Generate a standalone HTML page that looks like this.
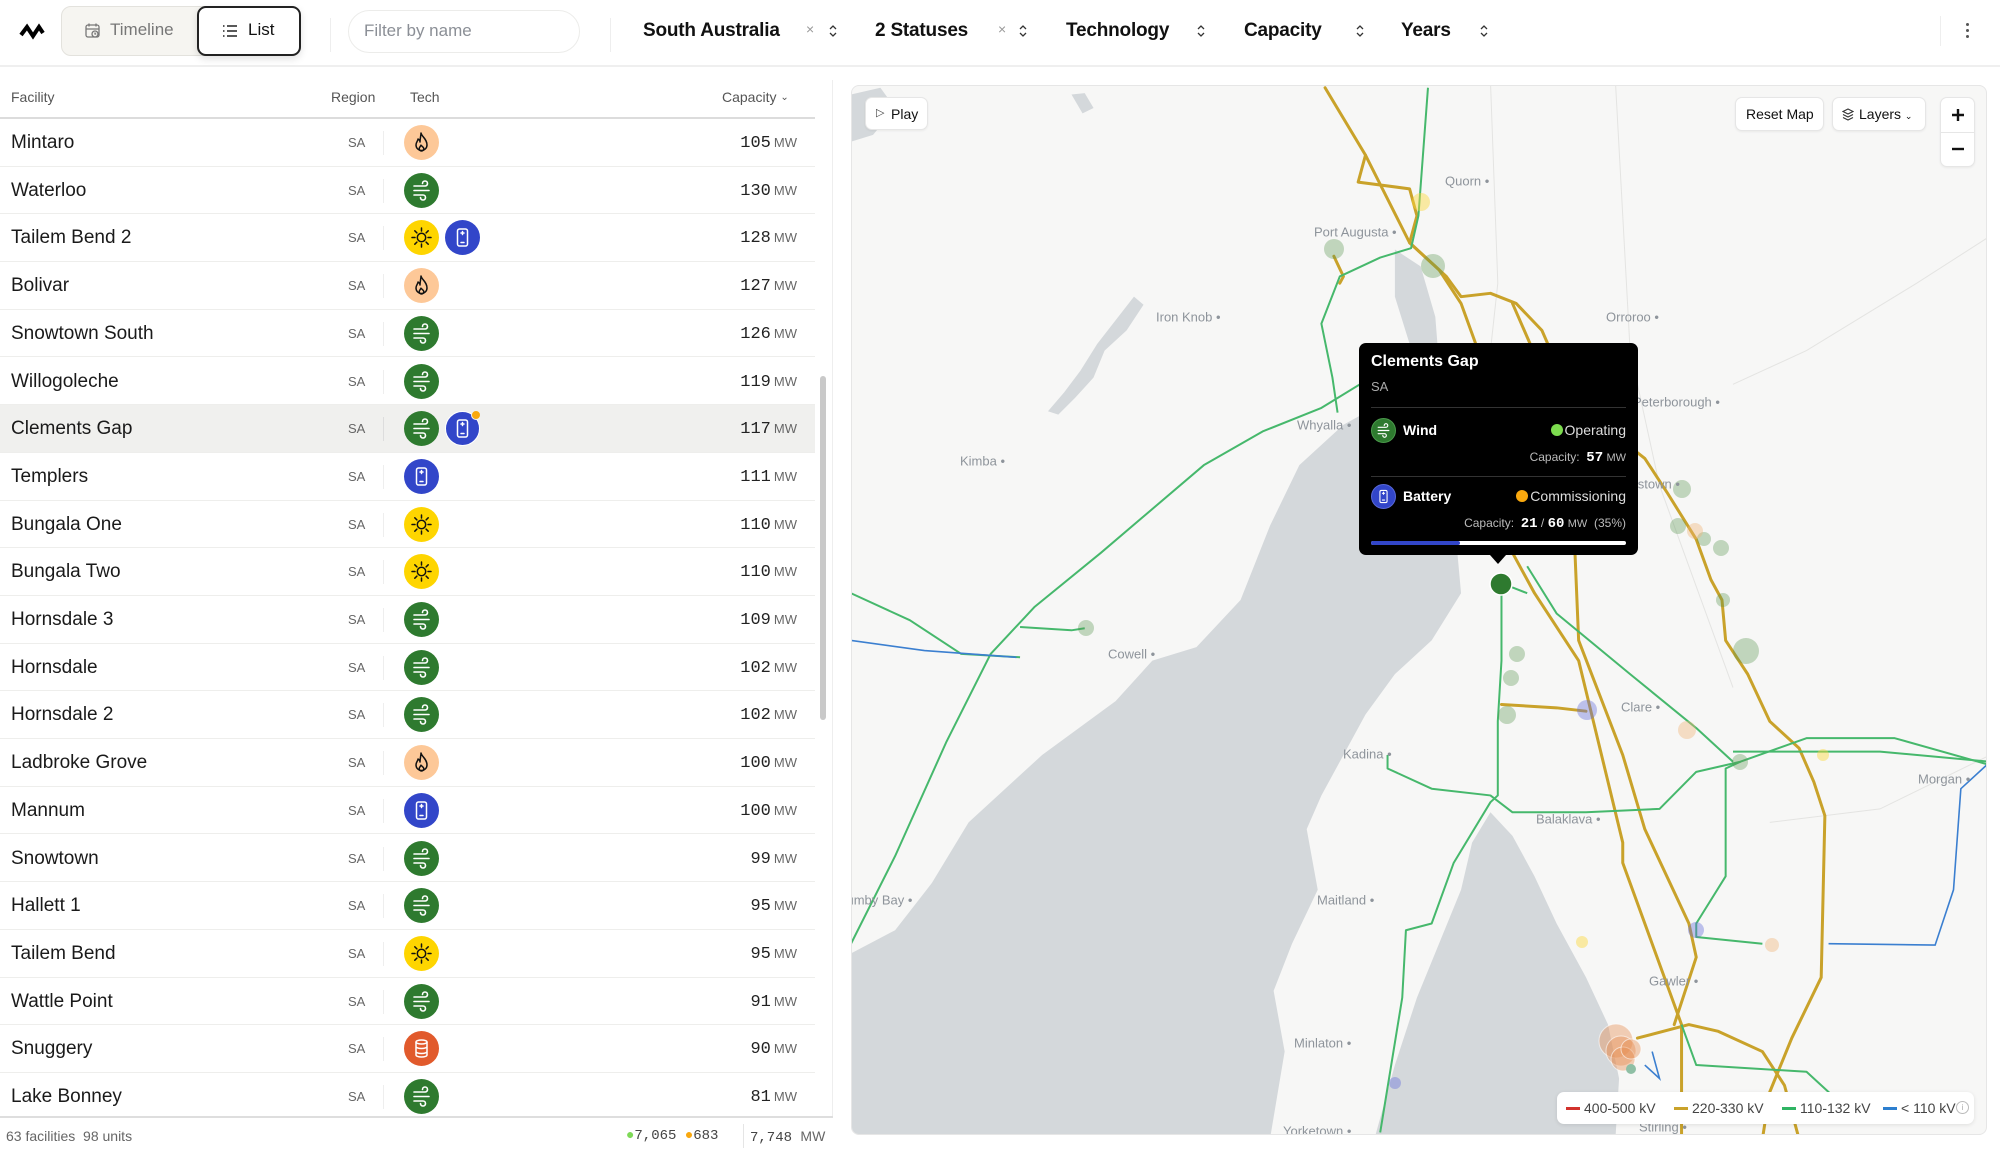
<!DOCTYPE html>
<html><head><meta charset="utf-8">
<style>
*{box-sizing:border-box;margin:0;padding:0}
body{width:2000px;height:1153px;overflow:hidden;background:#fff;font-family:"Liberation Sans",sans-serif;color:#111;position:relative}
.abs{position:absolute}
.hdr{position:absolute;left:0;top:0;width:2000px;height:67px;border-bottom:2px solid #efefef;background:#fff}
.flt{position:absolute;top:20px;font-size:19px;font-weight:bold;letter-spacing:-0.2px}
.chev{position:absolute;top:23px}
.x{position:absolute;top:21px;color:#999;font-size:14px}
.th{position:absolute;top:89px;font-size:14px;color:#555}
.row{position:absolute;left:0;width:815px;height:47.7px;border-bottom:1px solid #eeeeec}
.row .n{position:absolute;left:11px;top:13px;font-size:19px;color:#1a1a1a}
.row .r{position:absolute;left:348px;top:16px;font-size:13px;color:#666}
.row .sep{position:absolute;left:383px;top:12px;width:1px;height:24px;background:#eee}
.row .c{position:absolute;right:18px;top:13px;font-size:17px;font-family:"Liberation Mono",monospace;color:#222;line-height:22px}
.row .c small{font-family:"Liberation Sans",sans-serif;font-size:13px;color:#666;margin-left:3px;vertical-align:baseline}
.ic{position:absolute;top:6px;width:35px;height:35px;border-radius:50%}
.ic svg{position:absolute;left:0;top:0}
.mbtn{position:absolute;background:#fff;border:1px solid #e6e6e6;border-radius:7px;font-size:14px;color:#111;box-shadow:0 1px 2px rgba(0,0,0,.06)}
.lbl{font-size:13px;fill:#8e949b;font-family:"Liberation Sans",sans-serif}
</style></head><body>
<svg width="0" height="0" style="position:absolute">
<defs>
<symbol id="wind" viewBox="0 0 35 35"><g fill="none" stroke="#fff" stroke-width="1.6" stroke-linecap="round"><path d="M10 13h11a2.5 2.5 0 1 0-2.5-2.5"/><path d="M10 17.5h15"/><path d="M10 22h9a2.5 2.5 0 1 1-2.5 2.5"/></g></symbol>
<symbol id="gas" viewBox="0 0 35 35"><g fill="none" stroke="#111" stroke-width="1.5" stroke-linejoin="round"><path d="M17 8c1 4 6 6 6 12a5.5 5.5 0 0 1-11 0c0-3 2-4 2-6 1.5 1 2 2 2 3 0-4 1-6 1-9z"/><path d="M17.5 26a2.3 2.3 0 0 1-2.3-2.3c0-1.5 1.3-2.2 1.8-3.5.8 1 2.8 2 2.8 3.5a2.3 2.3 0 0 1-2.3 2.3z"/></g></symbol>
<symbol id="sun" viewBox="0 0 35 35"><g fill="none" stroke="#111" stroke-width="1.5" stroke-linecap="round"><circle cx="17.5" cy="17.5" r="4.2"/><path d="M17.5 8v3M17.5 24v3M8 17.5h3M24 17.5h3M10.8 10.8l2.1 2.1M22.1 22.1l2.1 2.1M10.8 24.2l2.1-2.1M22.1 12.9l2.1-2.1"/></g></symbol>
<symbol id="bat" viewBox="0 0 35 35"><g fill="none" stroke="#fff" stroke-width="1.5"><rect x="12.5" y="9" width="10" height="17" rx="2"/><path d="M17.5 11.5v3M16 13h3M16 22.5h3" stroke-linecap="round"/></g></symbol>
<symbol id="oil" viewBox="0 0 35 35"><g fill="none" stroke="#fff" stroke-width="1.5"><ellipse cx="17.5" cy="11" rx="5.5" ry="2"/><path d="M12 11v13c0 1.2 2.5 2 5.5 2s5.5-.8 5.5-2V11M12 15.5c0 1.2 2.5 2 5.5 2s5.5-.8 5.5-2M12 20.5c0 1.2 2.5 2 5.5 2s5.5-.8 5.5-2"/></g></symbol>
<symbol id="ud" viewBox="0 0 10 16"><path d="M2 6l3-3 3 3M2 10l3 3 3-3" fill="none" stroke="#333" stroke-width="1.3"/></symbol>
</defs></svg>

<div class="hdr">
 <svg class="abs" style="left:19px;top:21px" width="26" height="20" viewBox="0 0 26 20"><path d="M2 14L8 6l6 9 6-9 4 6" fill="none" stroke="#000" stroke-width="4" stroke-linejoin="miter"/></svg>
 <div class="abs" style="left:61px;top:6px;width:240px;height:50px;background:#f6f5f1;border:1px solid #e3e2dd;border-radius:10px"></div>
 <svg class="abs" style="left:84px;top:22px" width="18" height="18" viewBox="0 0 18 18"><g fill="none" stroke="#777" stroke-width="1.3"><rect x="2" y="3" width="13" height="12" rx="2"/><path d="M5 1.5v3M12 1.5v3M2 7h13"/><circle cx="11" cy="12" r="3" fill="#f6f5f1"/><path d="M11 10.5v1.5h1.2"/></g></svg>
 <div class="abs" style="left:110px;top:20px;font-size:17px;color:#777">Timeline</div>
 <div class="abs" style="left:197px;top:6px;width:104px;height:50px;background:#fff;border:2px solid #222;border-radius:9px;box-shadow:0 3px 8px rgba(0,0,0,.12)"></div>
 <svg class="abs" style="left:222px;top:23px" width="16" height="16" viewBox="0 0 16 16"><g stroke="#222" stroke-width="1.4"><path d="M5 3h10M5 8h10M5 13h10M1 3h1.5M1 8h1.5M1 13h1.5"/></g></svg>
 <div class="abs" style="left:248px;top:20px;font-size:17px;color:#111">List</div>
 <div class="abs" style="left:330px;top:18px;width:1px;height:34px;background:#eee"></div>
 <div class="abs" style="left:348px;top:10px;width:232px;height:43px;border:1px solid #ececea;border-radius:22px"></div>
 <div class="abs" style="left:364px;top:21px;font-size:17px;color:#8b8f96">Filter by name</div>
 <div class="abs" style="left:610px;top:18px;width:1px;height:34px;background:#eee"></div>
 <div class="flt" style="left:643px">South Australia</div><div class="x" style="left:806px">×</div><svg class="chev" style="left:828px" width="10" height="16"><use href="#ud"/></svg>
 <div class="flt" style="left:875px">2 Statuses</div><div class="x" style="left:998px">×</div><svg class="chev" style="left:1018px" width="10" height="16"><use href="#ud"/></svg>
 <div class="flt" style="left:1066px">Technology</div><svg class="chev" style="left:1196px" width="10" height="16"><use href="#ud"/></svg>
 <div class="flt" style="left:1244px">Capacity</div><svg class="chev" style="left:1355px" width="10" height="16"><use href="#ud"/></svg>
 <div class="flt" style="left:1401px">Years</div><svg class="chev" style="left:1479px" width="10" height="16"><use href="#ud"/></svg>
 <div class="abs" style="left:1940px;top:16px;width:1px;height:30px;background:#eee"></div>
 <div class="abs" style="left:1966px;top:23px;width:3px;height:3px;background:#555;border-radius:50%;box-shadow:0 6px 0 #555,0 12px 0 #555"></div>
</div>

<div class="th" style="left:11px">Facility</div>
<div class="th" style="left:331px">Region</div>
<div class="th" style="left:410px">Tech</div>
<div class="th" style="left:722px">Capacity <span style="font-size:10px;position:relative;top:-2px">⌄</span></div>
<div class="abs" style="left:0;top:117px;width:815px;height:2px;background:#dcdcdc"></div>

<div class="row" style="top:119px"><div class="n">Mintaro</div><div class="r">SA</div><div class="sep"></div><div class="ic" style="left:404px;background:#fdc898"><svg width="35" height="35"><use href="#gas"/></svg></div><div class="c">105<small>MW</small></div></div>
<div class="row" style="top:166.7px"><div class="n">Waterloo</div><div class="r">SA</div><div class="sep"></div><div class="ic" style="left:404px;background:#2e7a2f"><svg width="35" height="35"><use href="#wind"/></svg></div><div class="c">130<small>MW</small></div></div>
<div class="row" style="top:214.4px"><div class="n">Tailem Bend 2</div><div class="r">SA</div><div class="sep"></div><div class="ic" style="left:404px;background:#fed500"><svg width="35" height="35"><use href="#sun"/></svg></div><div class="ic" style="left:445px;background:#3246c9"><svg width="35" height="35"><use href="#bat"/></svg></div><div class="c">128<small>MW</small></div></div>
<div class="row" style="top:262.1px"><div class="n">Bolivar</div><div class="r">SA</div><div class="sep"></div><div class="ic" style="left:404px;background:#fdc898"><svg width="35" height="35"><use href="#gas"/></svg></div><div class="c">127<small>MW</small></div></div>
<div class="row" style="top:309.8px"><div class="n">Snowtown South</div><div class="r">SA</div><div class="sep"></div><div class="ic" style="left:404px;background:#2e7a2f"><svg width="35" height="35"><use href="#wind"/></svg></div><div class="c">126<small>MW</small></div></div>
<div class="row" style="top:357.5px"><div class="n">Willogoleche</div><div class="r">SA</div><div class="sep"></div><div class="ic" style="left:404px;background:#2e7a2f"><svg width="35" height="35"><use href="#wind"/></svg></div><div class="c">119<small>MW</small></div></div>
<div class="row" style="top:405.2px;background:#f0f0ee"><div class="n">Clements Gap</div><div class="r">SA</div><div class="sep" style="background:#ddd"></div><div class="ic" style="left:404px;background:#2e7a2f"><svg width="35" height="35"><use href="#wind"/></svg></div><div class="ic" style="left:445px;background:#3246c9;border:1.5px solid #fff"><svg width="35" height="35" style="left:-1.5px;top:-1.5px"><use href="#bat"/></svg></div><div class="abs" style="left:471px;top:5px;width:10px;height:10px;border-radius:50%;background:#f9a80e;border:1.5px solid #f0f0ee"></div><div class="c">117<small>MW</small></div></div>
<div class="row" style="top:452.9px"><div class="n">Templers</div><div class="r">SA</div><div class="sep"></div><div class="ic" style="left:404px;background:#3246c9"><svg width="35" height="35"><use href="#bat"/></svg></div><div class="c">111<small>MW</small></div></div>
<div class="row" style="top:500.6px"><div class="n">Bungala One</div><div class="r">SA</div><div class="sep"></div><div class="ic" style="left:404px;background:#fed500"><svg width="35" height="35"><use href="#sun"/></svg></div><div class="c">110<small>MW</small></div></div>
<div class="row" style="top:548.3px"><div class="n">Bungala Two</div><div class="r">SA</div><div class="sep"></div><div class="ic" style="left:404px;background:#fed500"><svg width="35" height="35"><use href="#sun"/></svg></div><div class="c">110<small>MW</small></div></div>
<div class="row" style="top:596px"><div class="n">Hornsdale 3</div><div class="r">SA</div><div class="sep"></div><div class="ic" style="left:404px;background:#2e7a2f"><svg width="35" height="35"><use href="#wind"/></svg></div><div class="c">109<small>MW</small></div></div>
<div class="row" style="top:643.7px"><div class="n">Hornsdale</div><div class="r">SA</div><div class="sep"></div><div class="ic" style="left:404px;background:#2e7a2f"><svg width="35" height="35"><use href="#wind"/></svg></div><div class="c">102<small>MW</small></div></div>
<div class="row" style="top:691.4px"><div class="n">Hornsdale 2</div><div class="r">SA</div><div class="sep"></div><div class="ic" style="left:404px;background:#2e7a2f"><svg width="35" height="35"><use href="#wind"/></svg></div><div class="c">102<small>MW</small></div></div>
<div class="row" style="top:739.1px"><div class="n">Ladbroke Grove</div><div class="r">SA</div><div class="sep"></div><div class="ic" style="left:404px;background:#fdc898"><svg width="35" height="35"><use href="#gas"/></svg></div><div class="c">100<small>MW</small></div></div>
<div class="row" style="top:786.8px"><div class="n">Mannum</div><div class="r">SA</div><div class="sep"></div><div class="ic" style="left:404px;background:#3246c9"><svg width="35" height="35"><use href="#bat"/></svg></div><div class="c">100<small>MW</small></div></div>
<div class="row" style="top:834.5px"><div class="n">Snowtown</div><div class="r">SA</div><div class="sep"></div><div class="ic" style="left:404px;background:#2e7a2f"><svg width="35" height="35"><use href="#wind"/></svg></div><div class="c">99<small>MW</small></div></div>
<div class="row" style="top:882.2px"><div class="n">Hallett 1</div><div class="r">SA</div><div class="sep"></div><div class="ic" style="left:404px;background:#2e7a2f"><svg width="35" height="35"><use href="#wind"/></svg></div><div class="c">95<small>MW</small></div></div>
<div class="row" style="top:929.9px"><div class="n">Tailem Bend</div><div class="r">SA</div><div class="sep"></div><div class="ic" style="left:404px;background:#fed500"><svg width="35" height="35"><use href="#sun"/></svg></div><div class="c">95<small>MW</small></div></div>
<div class="row" style="top:977.6px"><div class="n">Wattle Point</div><div class="r">SA</div><div class="sep"></div><div class="ic" style="left:404px;background:#2e7a2f"><svg width="35" height="35"><use href="#wind"/></svg></div><div class="c">91<small>MW</small></div></div>
<div class="row" style="top:1025.3px"><div class="n">Snuggery</div><div class="r">SA</div><div class="sep"></div><div class="ic" style="left:404px;background:#e15a2c"><svg width="35" height="35"><use href="#oil"/></svg></div><div class="c">90<small>MW</small></div></div>
<div class="row" style="top:1073px;border-bottom:none"><div class="n">Lake Bonney</div><div class="r">SA</div><div class="sep"></div><div class="ic" style="left:404px;background:#2e7a2f"><svg width="35" height="35"><use href="#wind"/></svg></div><div class="c">81<small>MW</small></div></div>

<div class="abs" style="left:820px;top:376px;width:6px;height:344px;border-radius:3px;background:#c9c9c9"></div>
<div class="abs" style="left:832px;top:80px;width:1px;height:1037px;background:#eee"></div>
<div class="abs" style="left:0;top:1116px;width:833px;height:2px;background:#dedede"></div>
<div class="abs" style="left:6px;top:1128px;font-size:14px;color:#666">63 facilities&nbsp;&nbsp;98 units</div>
<div class="abs" style="left:626px;top:1128px;font-size:14px;color:#444;font-family:'Liberation Mono',monospace"><span style="color:#7ed957">●</span>7,065 <span style="color:#f9a80e">●</span>683</div>
<div class="abs" style="left:743px;top:1124px;width:1px;height:24px;background:#e5e5e5"></div>
<div class="abs" style="left:750px;top:1128px;font-size:14px;color:#444;font-family:'Liberation Mono',monospace">7,748 <span style="font-family:'Liberation Sans',sans-serif;color:#666">MW</span></div>

<div class="abs" style="left:851px;top:85px;width:1136px;height:1050px;border:1px solid #e6e6e6;border-radius:8px;overflow:hidden;background:#f7f7f6">
<svg class="abs" style="left:-851px;top:-85px" width="2000" height="1153">
<g transform="translate(850,80) scale(0.735,0.674)">
 <g fill="#d4d8db">
  <path d="M740 250L775 275L795 350L800 420L815 560L825 700L830 760L790 830L740 880L700 940L670 1000L640 1060L620 1110L635 1200L600 1280L575 1350L590 1440L570 1570L-10 1570L-10 1300L60 1260L110 1190L160 1100L260 1000L360 920L410 860L470 840L530 770L570 660L610 570L670 510L720 480L760 390L740 320Z"/>
  <path d="M870 1085L900 1120L930 1180L960 1250L1000 1330L1030 1400L1045 1480L1040 1570L712 1570L740 1460L770 1360L800 1280L830 1200L845 1130Z"/>
  <path d="M0 20L40 10L60 40L30 80L0 90Z"/>
  <path d="M385 320L398 332L375 370L345 400L330 440L305 470L282 495L268 490L290 462L312 430L335 390L360 355Z"/>
  <path d="M300 20L318 18L330 40L315 48Z"/>
 </g>
 <g fill="none" stroke="#e4e4e2" stroke-width="1">
  <path vector-effect="non-scaling-stroke" d="M870 0L880 300L860 500"/>
  <path vector-effect="non-scaling-stroke" d="M1040 0L1060 400L1100 600L1200 900"/>
  <path vector-effect="non-scaling-stroke" d="M1550 230L1450 300L1300 400L1200 450"/>
  <path vector-effect="non-scaling-stroke" d="M1550 1000L1400 1080L1250 1100"/>
 </g>
 <g fill="none" stroke="#c9a22a" stroke-width="3" stroke-linejoin="round" stroke-linecap="round">
  <path vector-effect="non-scaling-stroke" d="M645 10L700 110L760 240L810 290L830 320L870 315L905 330L940 370L960 420L1010 500L1080 560L1110 610L1150 680L1170 740L1185 770L1190 830L1220 880L1250 950L1290 990L1310 1040L1325 1090L1320 1330L1280 1420L1250 1500L1240 1570"/>
  <path vector-effect="non-scaling-stroke" d="M700 110L690 150L760 160L770 200L760 240L800 280L830 330L860 420L880 560L900 700L930 760L990 860L1010 950L1050 1130L1050 1160L1090 1280L1110 1340L1130 1400L1130 1570"/>
  <path vector-effect="non-scaling-stroke" d="M900 330L920 380L960 480L985 700L990 830L1050 1000L1080 1110L1140 1250L1150 1300L1120 1400"/>
  <path vector-effect="non-scaling-stroke" d="M885 925L960 930L1000 935"/>
  <path vector-effect="non-scaling-stroke" d="M1070 1420L1140 1400L1180 1410L1240 1440L1270 1490L1290 1570"/>
  <path vector-effect="non-scaling-stroke" d="M657 260L670 290L665 300"/>
 </g>
 <g fill="none" stroke="#46b86c" stroke-width="2" stroke-linejoin="round">
  <path vector-effect="non-scaling-stroke" d="M785 10L772 200L762 248L720 262L665 290L640 360L655 440L662 492"/>
  <path vector-effect="non-scaling-stroke" d="M0 1280L60 1150L130 980L190 850L250 780L340 700L480 570L560 520L640 485L700 445L760 420"/>
  <path vector-effect="non-scaling-stroke" d="M0 760L80 800L150 850L230 855"/>
  <path vector-effect="non-scaling-stroke" d="M230 810L300 815L318 812"/>
  <path vector-effect="non-scaling-stroke" d="M885 745L885 860L880 950L880 1060L870 1070L820 1160L790 1250L755 1260L750 1360L720 1560"/>
  <path vector-effect="non-scaling-stroke" d="M730 1000L730 1020L790 1050L870 1060L900 1085L1000 1085L1100 1080L1150 1025L1210 1010L1300 975L1420 975L1550 1015"/>
  <path vector-effect="non-scaling-stroke" d="M1210 1010L1190 1020L1190 1180L1150 1250L1150 1270L1240 1280"/>
  <path vector-effect="non-scaling-stroke" d="M920 720L960 790L1060 880L1150 960L1200 1010"/>
  <path vector-effect="non-scaling-stroke" d="M1200 995L1400 995L1550 1010"/>
  <path vector-effect="non-scaling-stroke" d="M885 745L920 760"/>
  <path vector-effect="non-scaling-stroke" d="M1130 1400L1150 1460L1300 1470L1360 1530"/>
 </g>
 <g fill="none" stroke="#3b7fd0" stroke-width="1.6">
  <path vector-effect="non-scaling-stroke" d="M0 830L100 845L225 855"/>
  <path vector-effect="non-scaling-stroke" d="M1330 1280L1475 1282L1500 1200L1510 1050L1545 1015"/>
  <path vector-effect="non-scaling-stroke" d="M1080 1460L1100 1480L1090 1440"/>
 </g>
</g>
<g>
 <g fill="rgba(90,150,80,0.35)">
  <circle cx="1333" cy="248" r="10"/><circle cx="1432" cy="265" r="12"/><circle cx="1681" cy="488" r="9"/><circle cx="1677" cy="525" r="8"/><circle cx="1703" cy="538" r="7"/><circle cx="1720" cy="547" r="8"/><circle cx="1722" cy="599" r="7"/><circle cx="1745" cy="650" r="13"/><circle cx="1085" cy="627" r="8"/><circle cx="1516" cy="653" r="8"/><circle cx="1510" cy="677" r="8"/><circle cx="1506" cy="714" r="9"/><circle cx="1739" cy="761" r="8"/>
 </g>
 <g fill="rgba(250,215,60,0.45)"><circle cx="1420" cy="201" r="9"/><circle cx="1581" cy="941" r="6"/><circle cx="1822" cy="754" r="6"/></g>
 <g fill="rgba(100,110,220,0.4)"><circle cx="1586" cy="709" r="10"/><circle cx="1695" cy="929" r="8"/><circle cx="1394" cy="1082" r="6"/></g>
 <g fill="rgba(240,180,120,0.4)"><circle cx="1694" cy="530" r="8"/><circle cx="1686" cy="729" r="9"/><circle cx="1771" cy="944" r="7"/></g>
 <g fill="rgba(230,140,80,0.4)" stroke="rgba(255,255,255,0.6)"><circle cx="1615" cy="1040" r="17"/><circle cx="1620" cy="1050" r="15"/><circle cx="1622" cy="1058" r="12"/><circle cx="1630" cy="1048" r="10"/></g>
 <circle cx="1630" cy="1068" r="5" fill="#8fbfa5"/>
 <circle cx="1500" cy="583" r="11" fill="#2e7a2f" stroke="#fff" stroke-width="1.5"/>
</g>
<g dominant-baseline="middle">
 <text x="1444" y="181" class="lbl">Quorn •</text>
 <text x="1313" y="232" class="lbl">Port Augusta •</text>
 <text x="1155" y="317" class="lbl">Iron Knob •</text>
 <text x="1605" y="317" class="lbl">Orroroo •</text>
 <text x="1632" y="402" class="lbl">Peterborough •</text>
 <text x="1296" y="425" class="lbl">Whyalla •</text>
 <text x="959" y="461" class="lbl">Kimba •</text>
 <text x="1605" y="484" class="lbl">Jamestown •</text>
 <text x="1107" y="654" class="lbl">Cowell •</text>
 <text x="1620" y="707" class="lbl">Clare •</text>
 <text x="1342" y="754" class="lbl">Kadina •</text>
 <text x="1535" y="819" class="lbl">Balaklava •</text>
 <text x="1917" y="779" class="lbl">Morgan •</text>
 <text x="838" y="900" class="lbl">Tumby Bay •</text>
 <text x="1316" y="900" class="lbl">Maitland •</text>
 <text x="1648" y="981" class="lbl">Gawler •</text>
 <text x="1293" y="1043" class="lbl">Minlaton •</text>
 <text x="1282" y="1131" class="lbl">Yorketown •</text>
 <text x="1638" y="1127" class="lbl">Stirling •</text>
</g>
</svg>
</div>

<div class="mbtn" style="left:865px;top:97px;width:63px;height:33px"><span class="abs" style="left:10px;top:8px;font-size:11px;color:#444">▷</span><span class="abs" style="left:25px;top:8px">Play</span></div>
<div class="mbtn" style="left:1735px;top:97px;width:89px;height:34px"><span class="abs" style="left:10px;top:8px">Reset Map</span></div>
<div class="mbtn" style="left:1832px;top:97px;width:94px;height:34px"><svg class="abs" style="left:9px;top:10px" width="12" height="13" viewBox="0 0 12 13"><g fill="none" stroke="#333" stroke-width="1.1"><path d="M6 1L11 3.5 6 6 1 3.5Z"/><path d="M1 6.5L6 9l5-2.5M1 9.5L6 12l5-2.5"/></g></svg><span class="abs" style="left:26px;top:8px">Layers <span style="font-size:9px">⌄</span></span></div>
<div class="mbtn" style="left:1940px;top:97px;width:35px;height:70px"><div class="abs" style="left:0;top:34px;width:33px;height:1px;background:#e6e6e6"></div><svg class="abs" style="left:9px;top:9px" width="16" height="16"><path d="M8 2v12M2 8h12" stroke="#111" stroke-width="2.4"/></svg><svg class="abs" style="left:9px;top:43px" width="16" height="16"><path d="M2 8h12" stroke="#111" stroke-width="2.4"/></svg></div>

<div class="abs" style="left:1557px;top:1092px;width:417px;height:32px;background:#fff;border-radius:7px;box-shadow:0 1px 4px rgba(0,0,0,.1);font-size:14px;color:#444;white-space:nowrap">
 <span class="abs" style="left:9px;top:15px;width:14px;height:3px;background:#d2322d"></span><span class="abs" style="left:27px;top:8px">400-500 kV</span>
 <span class="abs" style="left:117px;top:15px;width:14px;height:3px;background:#c9a22a"></span><span class="abs" style="left:135px;top:8px">220-330 kV</span>
 <span class="abs" style="left:225px;top:15px;width:14px;height:3px;background:#2fb463"></span><span class="abs" style="left:243px;top:8px">110-132 kV</span>
 <span class="abs" style="left:326px;top:15px;width:14px;height:3px;background:#2d7fcf"></span><span class="abs" style="left:344px;top:8px">&lt; 110 kV</span>
 <span class="abs" style="left:399px;top:9px;width:13px;height:13px;border:1px solid #bbb;border-radius:50%;font-size:8px;color:#aaa;text-align:center;line-height:11px">i</span>
</div>

<div class="abs" style="left:1359px;top:343px;width:279px;height:212px;background:#000;border-radius:7px;color:#fff">
 <div class="abs" style="left:12px;top:10px;font-size:16px;font-weight:bold">Clements Gap</div>
 <div class="abs" style="left:12px;top:36px;font-size:13px;color:#aaa">SA</div>
 <div class="abs" style="left:12px;top:64px;width:255px;height:1px;background:#333"></div>
 <div class="abs" style="left:12px;top:75px;width:25px;height:25px;border-radius:50%;background:#2e7a2f;border:1px solid #4a9a4b"><svg width="25" height="25" viewBox="0 0 35 35" class="abs" style="left:-1px;top:-1px"><use href="#wind"/></svg></div>
 <div class="abs" style="left:44px;top:79px;font-size:14px;font-weight:bold">Wind</div>
 <div class="abs" style="right:12px;top:79px;font-size:14px;color:#ddd"><span style="display:inline-block;width:12px;height:12px;border-radius:50%;background:#7ddc4f;vertical-align:-1px;margin-right:2px"></span>Operating</div>
 <div class="abs" style="right:12px;top:107px;font-size:12px;color:#bbb">Capacity:&nbsp; <b style="color:#fff;font-size:14px;font-family:'Liberation Mono',monospace">57</b> <span style="font-size:11px">MW</span></div>
 <div class="abs" style="left:12px;top:133px;width:255px;height:1px;background:#333"></div>
 <div class="abs" style="left:12px;top:141px;width:25px;height:25px;border-radius:50%;background:#3246c9;border:1px solid #5868d8"><svg width="25" height="25" viewBox="0 0 35 35" class="abs" style="left:-1px;top:-1px"><use href="#bat"/></svg></div>
 <div class="abs" style="left:44px;top:145px;font-size:14px;font-weight:bold">Battery</div>
 <div class="abs" style="right:12px;top:145px;font-size:14px;color:#ddd"><span style="display:inline-block;width:12px;height:12px;border-radius:50%;background:#f9a80e;vertical-align:-1px;margin-right:2px"></span>Commissioning</div>
 <div class="abs" style="right:12px;top:173px;font-size:12px;color:#bbb;white-space:nowrap">Capacity:&nbsp; <b style="color:#fff;font-size:14px;font-family:'Liberation Mono',monospace">21</b> / <b style="color:#fff;font-size:14px;font-family:'Liberation Mono',monospace">60</b> <span style="font-size:11px">MW</span>&nbsp; (35%)</div>
 <div class="abs" style="left:12px;top:198px;width:255px;height:4px;background:#fff;border-radius:2px"><div style="width:35%;height:4px;background:#3246c9;border-radius:2px"></div></div>
 <div class="abs" style="left:131px;top:212px;width:0;height:0;border-left:8px solid transparent;border-right:8px solid transparent;border-top:9px solid #000"></div>
</div>
</body></html>
